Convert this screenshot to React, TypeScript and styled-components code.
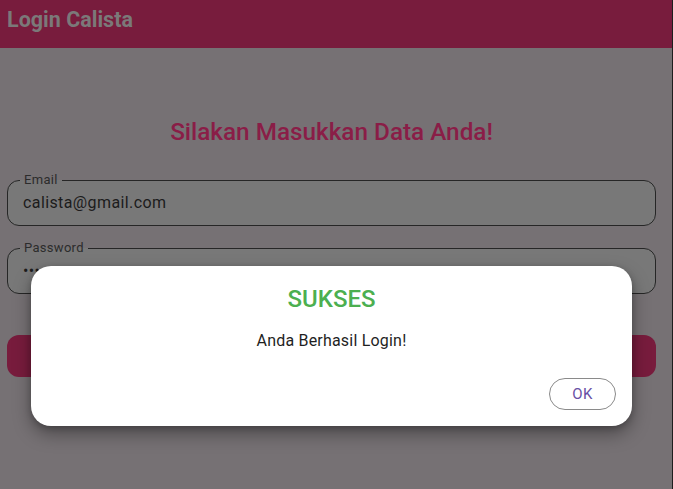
import React from "react";
import styled, { createGlobalStyle } from "styled-components";

const Global = createGlobalStyle`
  html, body { margin: 0; padding: 0; background: #1e1e1e; }
  body { font-family: Roboto, "Noto Sans", sans-serif; }
  * { box-sizing: border-box; }
`;

const Page = styled.div`
  position: relative;
  width: 672px;
  height: 489px;
  background: #767174;
  overflow: hidden;
`;

const AppBar = styled.header`
  height: 48px;
  background: #781c3d;
  display: flex;
  align-items: center;
  padding: 0 7px 8px;
`;

const AppTitle = styled.h1`
  margin: 0;
  font-size: 21.5px;
  line-height: 26px;
  font-weight: 700;
  color: #7b7979;
  letter-spacing: 0;
`;

const Content = styled.main`
  display: flex;
  flex-direction: column;
  padding: 69px 16px 0 7px;
`;

const Heading = styled.h2`
  margin: 0 0 26px;
  text-align: center;
  font-size: 24.3px;
  line-height: 30px;
  font-weight: 500;
  color: #8a1d47;
`;

const Field = styled.fieldset<{ $gap: number }>`
  margin: 0 0 ${(p) => p.$gap}px;
  border: 1px solid #262626;
  border-radius: 12px;
  padding: 4px 15px 10px;
  min-width: 0;
  background: #787878;
`;

const Legend = styled.legend`
  margin-left: -3px;
  padding: 0 4px;
  font-size: 13px;
  line-height: 14px;
  color: #2c2c2c;
  letter-spacing: 0.3px;
`;

const Value = styled.div`
  font-size: 16px;
  line-height: 24px;
  color: #1c1c1c;
  letter-spacing: 0.4px;
`;

const Submit = styled.div`
  height: 42px;
  border-radius: 12px;
  background: #781c3d;
`;

const Backdrop = styled.div`
  position: absolute;
  inset: 0;
  padding: 266px 0 0 31px;
`;

const Dialog = styled.div`
  width: 601px;
  height: 160px;
  background: #ffffff;
  border-radius: 20px;
  box-shadow: 0 8px 18px rgba(0, 0, 0, 0.35), 0 2px 6px rgba(0, 0, 0, 0.2);
  display: flex;
  flex-direction: column;
  align-items: center;
  padding: 18px 16px 0;
`;

const DialogTitle = styled.div`
  font-size: 24px;
  line-height: 30px;
  font-weight: 500;
  color: #4caf50;
`;

const DialogText = styled.div`
  margin-top: 16px;
  font-size: 16px;
  line-height: 22px;
  color: #1f1f1f;
  letter-spacing: 0.2px;
`;

const Actions = styled.div`
  align-self: stretch;
  display: flex;
  justify-content: flex-end;
  margin-top: 26px;
`;

const OkButton = styled.button`
  width: 67px;
  height: 32px;
  border-radius: 16px;
  border: 1px solid #8a8a8a;
  background: transparent;
  color: #6750a4;
  font-family: Roboto, sans-serif;
  font-size: 15px;
  letter-spacing: 0.4px;
  cursor: pointer;
`;

export default function App() {
  return (
    <>
      <Global />
      <Page>
        <AppBar>
          <AppTitle>Login Calista</AppTitle>
        </AppBar>
        <Content>
          <Heading>Silakan Masukkan Data Anda!</Heading>
          <Field $gap={15}>
            <Legend>Email</Legend>
            <Value>calista@gmail.com</Value>
          </Field>
          <Field $gap={41}>
            <Legend>Password</Legend>
            <Value>••••••••</Value>
          </Field>
          <Submit />
        </Content>
        <Backdrop>
          <Dialog>
            <DialogTitle>SUKSES</DialogTitle>
            <DialogText>Anda Berhasil Login!</DialogText>
            <Actions>
              <OkButton>OK</OkButton>
            </Actions>
          </Dialog>
        </Backdrop>
      </Page>
    </>
  );
}
